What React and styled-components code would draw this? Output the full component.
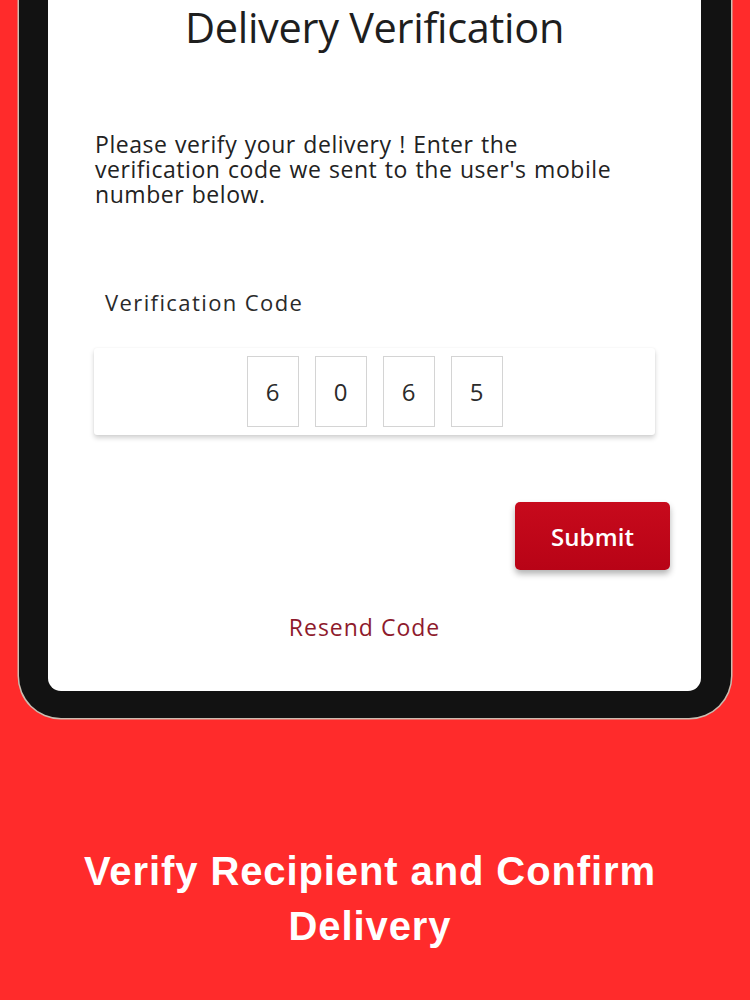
import React from "react";
import styled, { createGlobalStyle } from "styled-components";

const Global = createGlobalStyle`
  html, body { margin: 0; padding: 0; background: #ff2b2b; }
  #root { width: 750px; height: 1000px; overflow: hidden; }
  * { box-sizing: border-box; }
`;

const Page = styled.div`
  width: 750px;
  height: 1000px;
  background: #ff2b2b;
  display: flex;
  flex-direction: column;
  align-items: stretch;
`;

const Device = styled.div`
  margin: 0 19px 0 19px;
  height: 718px;
  background: #121212;
  border-radius: 0 0 42px 42px;
  box-shadow: 0 0 0 1.5px #cbbcb0;
  padding: 0 30px 27px 29px;
  display: flex;
`;

const Screen = styled.div`
  flex: 1;
  background: #ffffff;
  border-radius: 0 0 13px 13px;
  display: flex;
  flex-direction: column;
  font-family: "Open Sans", Lato, sans-serif;
  color: #222;
`;

const Title = styled.h1`
  margin: 0;
  text-align: center;
  font-weight: 400;
  font-size: 41.5px;
  line-height: 54px;
  letter-spacing: -0.3px;
  color: #1e1e1e;
`;

const Intro = styled.p`
  margin: 78px 60px 0 47px;
  font-size: 23px;
  line-height: 25px;
  letter-spacing: 0.55px;
  word-spacing: 1px;
  color: #222;
`;

const Label = styled.div`
  margin: 82px 0 0 57px;
  font-size: 22px;
  line-height: 26px;
  letter-spacing: 1.4px;
  color: #2a2a2a;
`;

const CodeCard = styled.div`
  margin: 33px 46px 0 46px;
  height: 87px;
  background: #fff;
  border-radius: 3px;
  box-shadow: 0 3px 5px rgba(0, 0, 0, 0.18), 0 0 2px rgba(0, 0, 0, 0.06);
  display: flex;
  justify-content: center;
  align-items: center;
  gap: 16px;
`;

const Digit = styled.div`
  width: 52px;
  height: 71px;
  border: 1px solid #d4d4d4;
  display: flex;
  align-items: center;
  justify-content: center;
  font-size: 24px;
  color: #2b2b2b;
`;

const Actions = styled.div`
  margin-top: 67px;
  display: flex;
  justify-content: flex-end;
  padding-right: 31px;
`;

const SubmitButton = styled.button`
  width: 155px;
  height: 68px;
  border: none;
  border-radius: 5px;
  background: linear-gradient(180deg, #c70a1c 0%, #b80316 100%);
  box-shadow: 0 4px 6px rgba(0, 0, 0, 0.3);
  color: #fff;
  font-family: "Open Sans", Lato, sans-serif;
  font-size: 24px;
  font-weight: 600;
  letter-spacing: 0.1px;
  cursor: pointer;
`;

const Resend = styled.div`
  margin-top: 41px;
  text-align: center;
  padding-right: 20px;
  font-size: 23px;
  letter-spacing: 1px;
  color: #8e1a2c;
`;

const Caption = styled.div`
  margin-top: 126px;
  text-align: center;
  font-family: "Liberation Sans", Arial, sans-serif;
  font-weight: 700;
  font-size: 40px;
  line-height: 55px;
  letter-spacing: 0.9px;
  color: #fff;
  padding: 0 20px 0 10px;
`;

const code = ["6", "0", "6", "5"];

export default function App() {
  return (
    <Page>
      <Global />
      <Device>
        <Screen>
          <Title>Delivery Verification</Title>
          <Intro>
            Please verify your delivery ! Enter the verification code we sent to the user's mobile number below.
          </Intro>
          <Label>Verification Code</Label>
          <CodeCard>
            {code.map((d, i) => (
              <Digit key={i}>{d}</Digit>
            ))}
          </CodeCard>
          <Actions>
            <SubmitButton>Submit</SubmitButton>
          </Actions>
          <Resend>Resend Code</Resend>
        </Screen>
      </Device>
      <Caption>
        Verify Recipient and Confirm
        <br />
        Delivery
      </Caption>
    </Page>
  );
}
